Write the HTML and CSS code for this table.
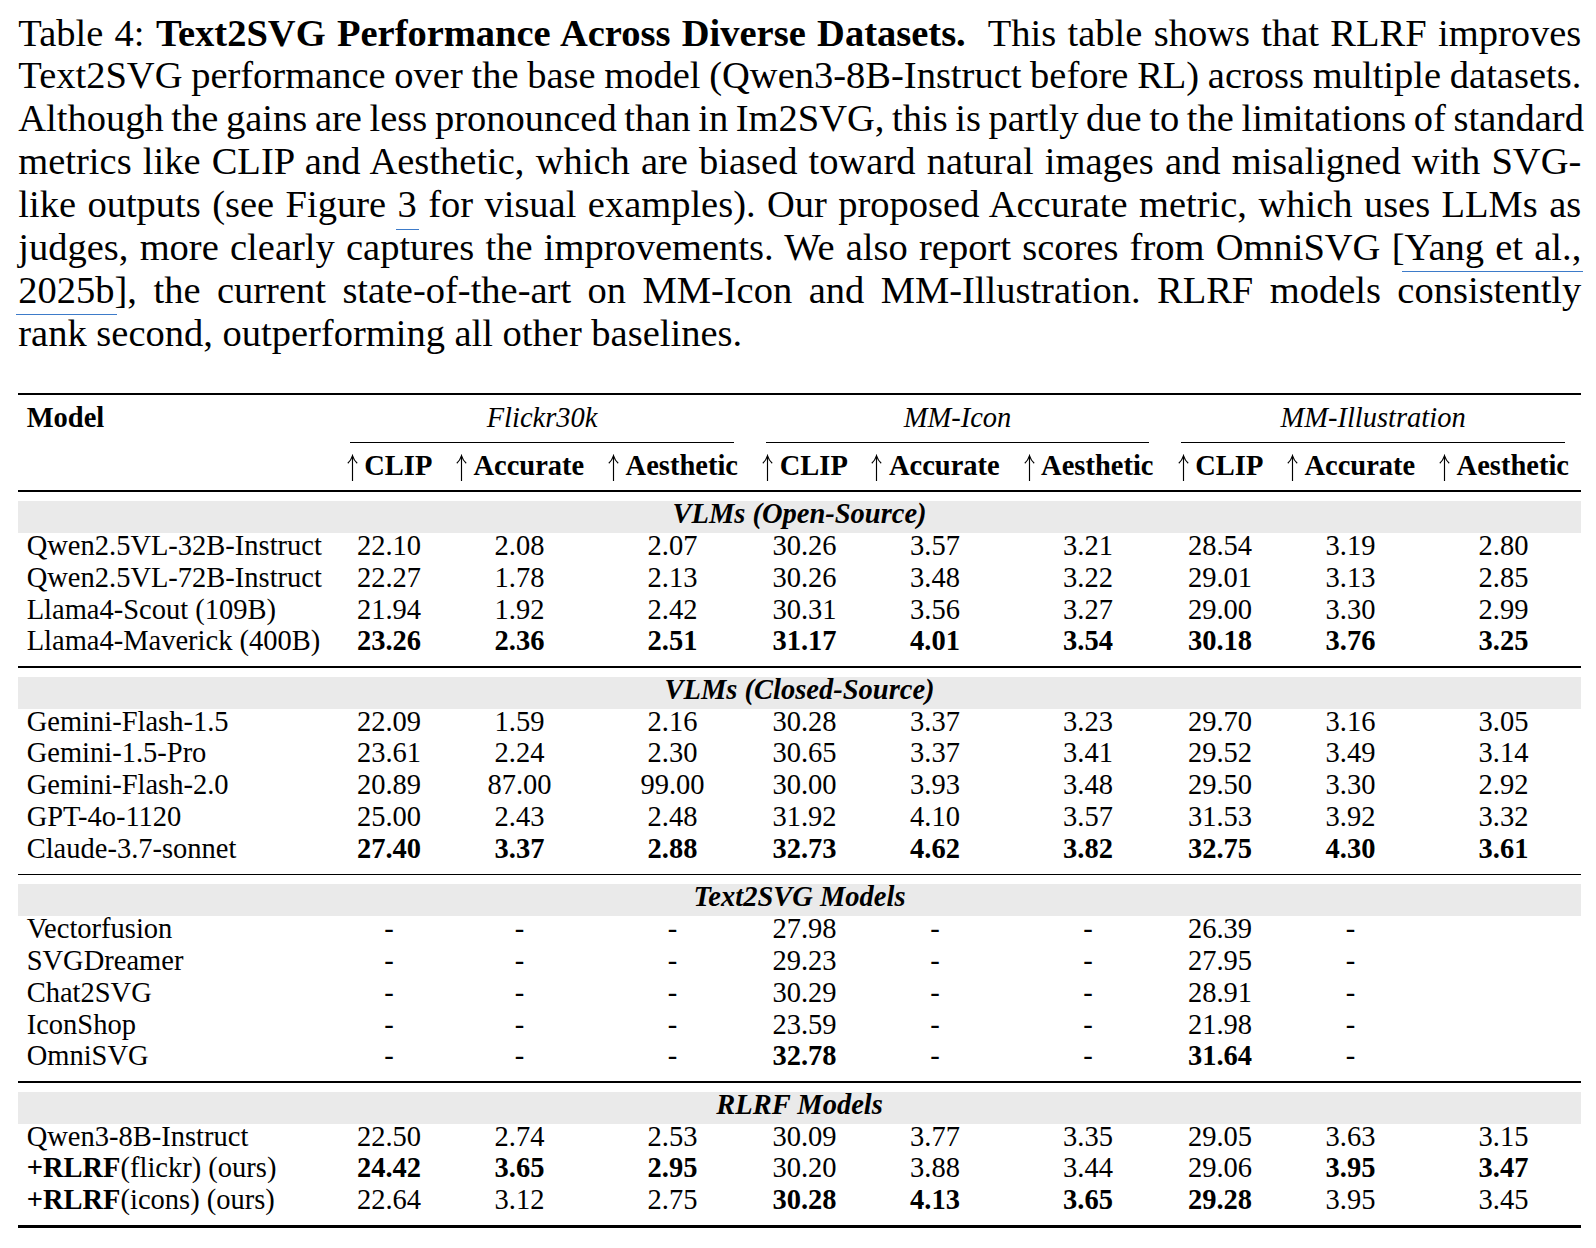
FILE: index.html
```html
<!DOCTYPE html>
<html>
<head>
<meta charset="utf-8">
<link rel="stylesheet" href="styles.css">
</head>
<body>
<div class="page">
  <p class="caption">
    <span class="ln">Table 4: <b>Text2SVG Performance Across Diverse Datasets.</b>&nbsp; This table shows that RLRF improves</span>
    <span class="ln">Text2SVG performance over the base model (Qwen3-8B-Instruct before RL) across multiple datasets.</span>
    <span class="ln">Although the gains are less pronounced than in Im2SVG, this is partly due to the limitations of standard</span>
    <span class="ln">metrics like CLIP and Aesthetic, which are biased toward natural images and misaligned with SVG-</span>
    <span class="ln">like outputs (see Figure <a class="ref">3</a> for visual examples). Our proposed Accurate metric, which uses LLMs as</span>
    <span class="ln">judges, more clearly captures the improvements. We also report scores from OmniSVG [<a class="ref">Yang et al.,</a></span>
    <span class="ln"><a class="ref">2025b</a>], the current state-of-the-art on MM-Icon and MM-Illustration. RLRF models consistently</span>
    <span class="ln last">rank second, outperforming all other baselines.</span>
  </p>

  <div class="tbl">
    <div class="rule thick top"></div>
    <div class="tr hd">
      <span class="m"><b>Model</b></span>
      <span class="grp">Flickr30k</span>
      <span class="grp">MM-Icon</span>
      <span class="grp">MM-Illustration</span>
    </div>
    <div class="cmid"><span></span><i></i><i></i><i></i></div>
    <div class="tr hd2">
      <span class="m"></span>
      <span><svg class="ar" viewBox="0 0 13 27" width="13" height="27"><path d="M6.5 1.6V27M1.8 9.2C4.1 7.2 5.6 4.6 6.5 1.6C7.4 4.6 8.9 7.2 11.2 9.2"/></svg>CLIP</span>
      <span><svg class="ar" viewBox="0 0 13 27" width="13" height="27"><path d="M6.5 1.6V27M1.8 9.2C4.1 7.2 5.6 4.6 6.5 1.6C7.4 4.6 8.9 7.2 11.2 9.2"/></svg>Accurate</span>
      <span><svg class="ar" viewBox="0 0 13 27" width="13" height="27"><path d="M6.5 1.6V27M1.8 9.2C4.1 7.2 5.6 4.6 6.5 1.6C7.4 4.6 8.9 7.2 11.2 9.2"/></svg>Aesthetic</span>
      <span><svg class="ar" viewBox="0 0 13 27" width="13" height="27"><path d="M6.5 1.6V27M1.8 9.2C4.1 7.2 5.6 4.6 6.5 1.6C7.4 4.6 8.9 7.2 11.2 9.2"/></svg>CLIP</span>
      <span><svg class="ar" viewBox="0 0 13 27" width="13" height="27"><path d="M6.5 1.6V27M1.8 9.2C4.1 7.2 5.6 4.6 6.5 1.6C7.4 4.6 8.9 7.2 11.2 9.2"/></svg>Accurate</span>
      <span><svg class="ar" viewBox="0 0 13 27" width="13" height="27"><path d="M6.5 1.6V27M1.8 9.2C4.1 7.2 5.6 4.6 6.5 1.6C7.4 4.6 8.9 7.2 11.2 9.2"/></svg>Aesthetic</span>
      <span><svg class="ar" viewBox="0 0 13 27" width="13" height="27"><path d="M6.5 1.6V27M1.8 9.2C4.1 7.2 5.6 4.6 6.5 1.6C7.4 4.6 8.9 7.2 11.2 9.2"/></svg>CLIP</span>
      <span><svg class="ar" viewBox="0 0 13 27" width="13" height="27"><path d="M6.5 1.6V27M1.8 9.2C4.1 7.2 5.6 4.6 6.5 1.6C7.4 4.6 8.9 7.2 11.2 9.2"/></svg>Accurate</span>
      <span><svg class="ar" viewBox="0 0 13 27" width="13" height="27"><path d="M6.5 1.6V27M1.8 9.2C4.1 7.2 5.6 4.6 6.5 1.6C7.4 4.6 8.9 7.2 11.2 9.2"/></svg>Aesthetic</span>
    </div>
    <div class="rule mid first"></div>

    <div class="tr sec"><span>VLMs (Open-Source)</span></div>
    <div class="tr"><span class="m">Qwen2.5VL-32B-Instruct</span><span>22.10</span><span>2.08</span><span>2.07</span><span>30.26</span><span>3.57</span><span>3.21</span><span>28.54</span><span>3.19</span><span>2.80</span></div>
    <div class="tr"><span class="m">Qwen2.5VL-72B-Instruct</span><span>22.27</span><span>1.78</span><span>2.13</span><span>30.26</span><span>3.48</span><span>3.22</span><span>29.01</span><span>3.13</span><span>2.85</span></div>
    <div class="tr"><span class="m">Llama4-Scout (109B)</span><span>21.94</span><span>1.92</span><span>2.42</span><span>30.31</span><span>3.56</span><span>3.27</span><span>29.00</span><span>3.30</span><span>2.99</span></div>
    <div class="tr"><span class="m">Llama4-Maverick (400B)</span><b>23.26</b><b>2.36</b><b>2.51</b><b>31.17</b><b>4.01</b><b>3.54</b><b>30.18</b><b>3.76</b><b>3.25</b></div>
    <div class="rule mid"></div>

    <div class="tr sec"><span>VLMs (Closed-Source)</span></div>
    <div class="tr"><span class="m">Gemini-Flash-1.5</span><span>22.09</span><span>1.59</span><span>2.16</span><span>30.28</span><span>3.37</span><span>3.23</span><span>29.70</span><span>3.16</span><span>3.05</span></div>
    <div class="tr"><span class="m">Gemini-1.5-Pro</span><span>23.61</span><span>2.24</span><span>2.30</span><span>30.65</span><span>3.37</span><span>3.41</span><span>29.52</span><span>3.49</span><span>3.14</span></div>
    <div class="tr"><span class="m">Gemini-Flash-2.0</span><span>20.89</span><span>87.00</span><span>99.00</span><span>30.00</span><span>3.93</span><span>3.48</span><span>29.50</span><span>3.30</span><span>2.92</span></div>
    <div class="tr"><span class="m">GPT-4o-1120</span><span>25.00</span><span>2.43</span><span>2.48</span><span>31.92</span><span>4.10</span><span>3.57</span><span>31.53</span><span>3.92</span><span>3.32</span></div>
    <div class="tr"><span class="m">Claude-3.7-sonnet</span><b>27.40</b><b>3.37</b><b>2.88</b><b>32.73</b><b>4.62</b><b>3.82</b><b>32.75</b><b>4.30</b><b>3.61</b></div>
    <div class="rule mid"></div>

    <div class="tr sec"><span>Text2SVG Models</span></div>
    <div class="tr"><span class="m">Vectorfusion</span><span>-</span><span>-</span><span>-</span><span>27.98</span><span>-</span><span>-</span><span>26.39</span><span>-</span><span></span></div>
    <div class="tr"><span class="m">SVGDreamer</span><span>-</span><span>-</span><span>-</span><span>29.23</span><span>-</span><span>-</span><span>27.95</span><span>-</span><span></span></div>
    <div class="tr"><span class="m">Chat2SVG</span><span>-</span><span>-</span><span>-</span><span>30.29</span><span>-</span><span>-</span><span>28.91</span><span>-</span><span></span></div>
    <div class="tr"><span class="m">IconShop</span><span>-</span><span>-</span><span>-</span><span>23.59</span><span>-</span><span>-</span><span>21.98</span><span>-</span><span></span></div>
    <div class="tr"><span class="m">OmniSVG</span><span>-</span><span>-</span><span>-</span><b>32.78</b><span>-</span><span>-</span><b>31.64</b><span>-</span><span></span></div>
    <div class="rule mid"></div>

    <div class="tr sec"><span>RLRF Models</span></div>
    <div class="tr"><span class="m">Qwen3-8B-Instruct</span><span>22.50</span><span>2.74</span><span>2.53</span><span>30.09</span><span>3.77</span><span>3.35</span><span>29.05</span><span>3.63</span><span>3.15</span></div>
    <div class="tr"><span class="m"><b>+RLRF</b>(flickr) (ours)</span><b>24.42</b><b>3.65</b><b>2.95</b><span>30.20</span><span>3.88</span><span>3.44</span><span>29.06</span><b>3.95</b><b>3.47</b></div>
    <div class="tr"><span class="m"><b>+RLRF</b>(icons) (ours)</span><span>22.64</span><span>3.12</span><span>2.75</span><b>30.28</b><b>4.13</b><b>3.65</b><b>29.28</b><span>3.95</span><span>3.45</span></div>
    <div class="rule thick bottom"></div>
  </div>
</div>
</body>
</html>
```

FILE: styles.css
```css
html, body {
  margin: 0;
  padding: 0;
  background: #ffffff;
}

.page {
  padding: 11.5px 0 0 18.3px;
  width: 1563px;
  color: #000000;
  font-family: "Liberation Serif", "Times New Roman", serif;
}

.caption {
  margin: 0;
  font-size: 38.5px;
  line-height: 42.86px;
  word-spacing: -2px;
}

.ln {
  display: block;
  white-space: nowrap;
  text-align: justify;
  text-align-last: justify;
}

.ln.last {
  text-align-last: left;
  word-spacing: normal;
}

.ref {
  color: inherit;
  text-decoration: none;
  padding: 0 2px 3.6px;
  margin: 0 -2px;
  border-bottom: 1.5px solid #3d7bc9;
}

.tbl {
  width: 1562.5px;
  margin-top: 38.3px;
  font-size: 28.5px;
}

.rule {
  background: #000000;
}

.rule.thick {
  height: 2.6px;
}

.rule.top {
  margin-bottom: 9.9px;
}

.rule.bottom {
  margin-top: 6.2px;
}

.rule.mid {
  height: 1.5px;
  margin: 5.8px 0 9.2px;
}

.rule.mid.first {
  margin: 5px 0 9.2px;
}

.tr,
.cmid {
  display: grid;
  grid-template-columns: 316px repeat(3, 109.5px 151.5px 154.5px);
}

.tr {
  box-sizing: border-box;
  height: 31.85px;
  padding-top: 1px;
  line-height: 23.75px;
}

.tr > span,
.tr > b {
  text-align: center;
  white-space: nowrap;
}

.tr > .m {
  text-align: left;
  padding-left: 8.4px;
}

.grp {
  grid-column: span 3;
  font-style: italic;
}

.hd2 > span {
  font-weight: bold;
}

.ar {
  vertical-align: -6px;
  margin-right: 5.5px;
  fill: none;
  stroke: #000000;
  stroke-width: 1.15;
}

.cmid {
  padding: 4.7px 0 10.6px;
}

.cmid > i {
  grid-column: span 3;
  height: 1.2px;
  margin: 0 16px;
  background: #000000;
}

.sec {
  background: #eaeaea;
}

.sec > span {
  grid-column: 1 / -1;
  font-weight: bold;
  font-style: italic;
}
```
